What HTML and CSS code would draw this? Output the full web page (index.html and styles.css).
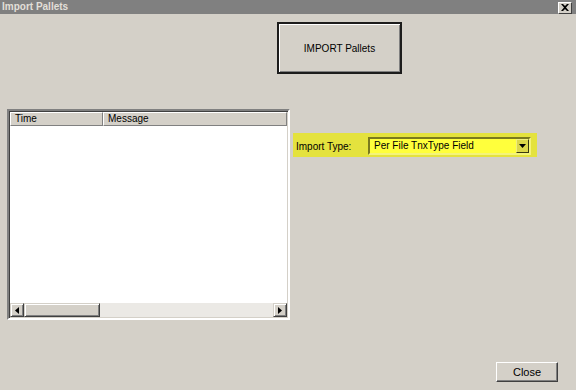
FILE: index.html
```html
<!doctype html>
<html lang="en">
  <head>
    <meta charset="UTF-8" />
    <title>Import Pallets</title>
    <link rel="stylesheet" href="styles.css">
  </head>
  <body>
    <div class="window">
      <div class="titlebar">
        <span class="title">Import Pallets</span>
        <button class="title-close">
          <svg width="8" height="7" viewBox="0 0 8 7"><path d="M0 0h2l2 2 2-2h2L5 3.5 8 7H6L4 5 2 7H0l3-3.5z" fill="#000"/></svg>
        </button>
      </div>
      <div class="content">
        <div class="top-row">
          <button class="btn import-btn">IMPORT Pallets</button>
        </div>
        <div class="middle-row">
          <div class="list-box">
            <div class="list-header">
              <div class="col col-time">Time</div>
              <div class="col col-msg">Message</div>
            </div>
            <div class="list-body"></div>
            <div class="hscroll">
              <div class="sb-btn"><svg width="4" height="7" viewBox="0 0 4 7"><path d="M4 0v7L0 3.5z" fill="#000"/></svg></div>
              <div class="sb-thumb"></div>
              <div class="sb-track"></div>
              <div class="sb-btn"><svg width="4" height="7" viewBox="0 0 4 7"><path d="M0 0v7l4-3.5z" fill="#000"/></svg></div>
            </div>
          </div>
          <div class="options">
            <div class="type-row">
              <label class="type-label">Import Type:</label>
              <div class="combo">
                <span class="combo-text">Per File TnxType Field</span>
                <div class="combo-btn"><svg width="7" height="4" viewBox="0 0 7 4"><path d="M0 0h7L3.5 4z" fill="#000"/></svg></div>
              </div>
            </div>
          </div>
        </div>
        <div class="footer">
          <button class="btn close-btn">Close</button>
        </div>
      </div>
    </div>
  </body>
</html>
```

FILE: styles.css
```css
body {
  margin: 0;
  font-family: "Liberation Sans", Arial, sans-serif;
  font-size: 10px;
  color: #000;
}
.window {
  width: 576px;
  height: 390px;
  background-color: #d4d0c8;
  display: flex;
  flex-direction: column;
  overflow: hidden;
}
.titlebar {
  height: 14px;
  background-color: #808080;
  display: flex;
  align-items: center;
  justify-content: space-between;
  padding: 0 4px 0 2px;
  flex-shrink: 0;
}
.title {
  color: #e2dfd8;
  font-weight: bold;
  font-size: 10px;
  line-height: 14px;
}
.title-close {
  width: 14px;
  height: 12px;
  padding: 0;
  margin-top: 1px;
  background-color: #d4d0c8;
  border: 1px solid;
  border-color: #fff #404040 #404040 #fff;
  display: flex;
  align-items: center;
  justify-content: center;
}
.content {
  flex: 1;
  display: flex;
  flex-direction: column;
}
.btn {
  font-family: "Liberation Sans", Arial, sans-serif;
  font-size: 10px;
  color: #000;
  background-color: #d4d0c8;
  border: 1px solid;
  border-color: #fff #404040 #404040 #fff;
  box-shadow: inset -1px -1px 0 #808080;
  padding: 0;
}
.top-row {
  padding: 8px 0 0 277px;
}
.import-btn {
  width: 125px;
  height: 52px;
  border: 2px solid #1c1c1c;
  box-shadow: inset 1px 1px 0 #fff, inset -1px -1px 0 #808080;
}
.middle-row {
  display: flex;
  margin-top: 35px;
  padding-left: 7px;
}
.list-box {
  width: 283px;
  height: 211px;
  box-sizing: border-box;
  border: 2px solid;
  border-color: #808080 #fff #fff #808080;
  box-shadow: inset 1px 1px 0 #404040, inset -1px -1px 0 #d4d0c8;
  background-color: #fff;
  display: flex;
  flex-direction: column;
  padding: 1px 1px 1px 1px;
}
.list-header {
  display: flex;
  height: 14px;
  flex-shrink: 0;
}
.col {
  box-sizing: border-box;
  background-color: #d4d0c8;
  border: 1px solid;
  border-color: #fff #808080 #808080 #fff;
  line-height: 12px;
  padding-left: 4px;
}
.col-time {
  width: 93px;
}
.col-msg {
  flex: 1;
}
.list-body {
  flex: 1;
}
.hscroll {
  display: flex;
  height: 14px;
  flex-shrink: 0;
  background-color: #ebe9e5;
}
.sb-btn {
  width: 14px;
  box-sizing: border-box;
  background-color: #d4d0c8;
  border: 1px solid;
  border-color: #d4d0c8 #404040 #404040 #d4d0c8;
  box-shadow: inset 1px 1px 0 #fff, inset -1px -1px 0 #808080;
  display: flex;
  align-items: center;
  justify-content: center;
}
.sb-thumb {
  width: 76px;
  box-sizing: border-box;
  background-color: #d4d0c8;
  border: 1px solid;
  border-color: #d4d0c8 #404040 #404040 #d4d0c8;
  box-shadow: inset 1px 1px 0 #fff, inset -1px -1px 0 #808080;
}
.sb-track {
  flex: 1;
}
.options {
  padding: 24px 0 0 3px;
}
.type-row {
  width: 244px;
  height: 24px;
  background-color: #e4e23e;
  display: flex;
  align-items: center;
  box-sizing: border-box;
  padding: 0 6px 0 3px;
}
.type-label {
  width: 72px;
  padding-top: 3px;
}
.combo {
  flex: 1;
  height: 18px;
  box-sizing: border-box;
  border: 2px solid;
  border-color: #7a7a1e #f4f47a #f4f47a #7a7a1e;
  background-color: #ffff3c;
  display: flex;
  align-items: center;
  margin-top: 1px;
}
.combo-text {
  flex: 1;
  padding-left: 4px;
}
.combo-btn {
  width: 13px;
  height: 14px;
  box-sizing: border-box;
  background-color: #dcd84a;
  border: 1px solid;
  border-color: #f0ee80 #3a3a10 #3a3a10 #f0ee80;
  display: flex;
  align-items: center;
  justify-content: center;
}
.footer {
  display: flex;
  justify-content: flex-end;
  padding: 42px 18px 0 0;
}
.close-btn {
  width: 62px;
  height: 20px;
  font-size: 11px;
}
```
